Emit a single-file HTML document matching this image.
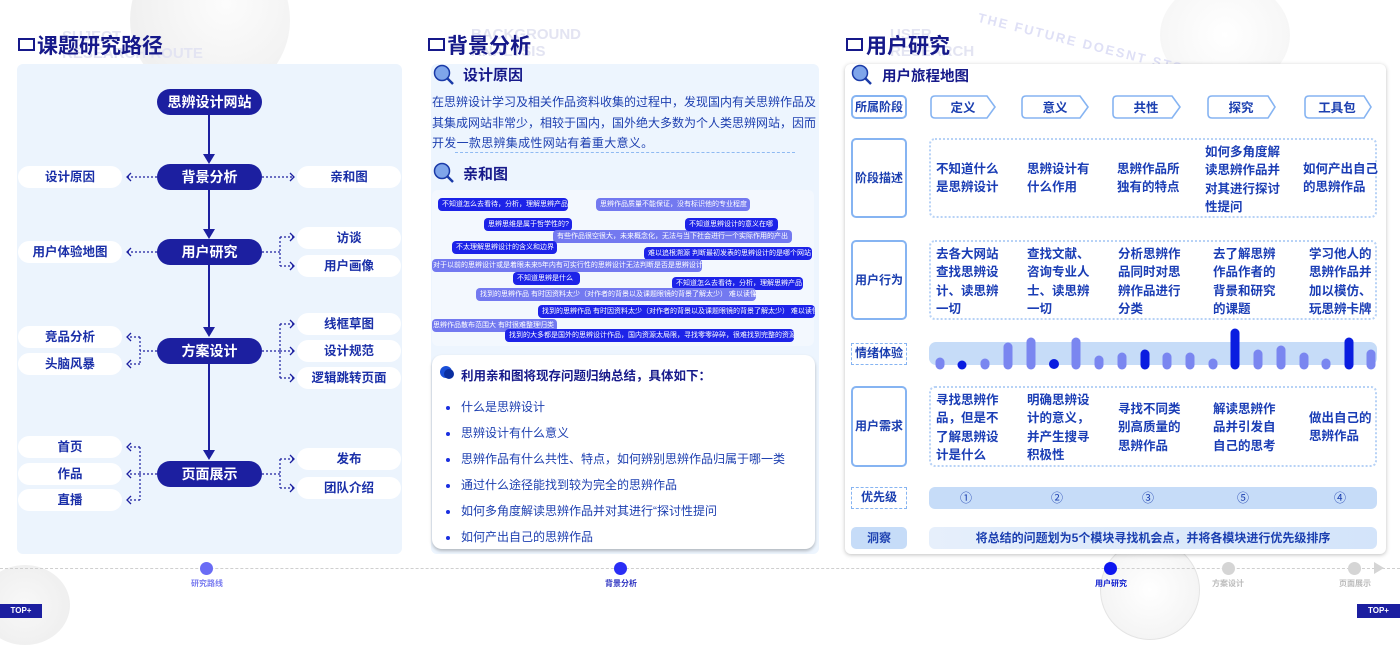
<!DOCTYPE html>
<html><head><meta charset="utf-8"><style>
*{margin:0;padding:0;box-sizing:border-box}
body{width:1400px;height:618px;position:relative;overflow:hidden;background:#fff;font-family:"Liberation Sans","Noto Sans CJK SC",sans-serif}
.a{position:absolute}
.h1{font-size:21px;font-weight:bold;color:#16198a;letter-spacing:0px}
.wm{color:#e3e4f2;font-weight:bold;font-size:15px;line-height:17px}
.node{position:absolute;left:157px;width:105px;height:26px;border-radius:13px;background:#1c1fa0;color:#fff;font-weight:bold;font-size:14px;text-align:center;line-height:26px}
.pill{position:absolute;width:104px;height:22px;border-radius:11px;background:#fff;color:#1a2fa8;font-weight:bold;font-size:12.5px;text-align:center;line-height:22px}
.pl{left:18px}.pr{left:297px}
.tag{position:absolute;height:13px;border-radius:4px;font-size:7px;line-height:13px;color:#fff;white-space:nowrap;padding:0 4px;overflow:hidden}
.d{background:#1d23e8}.l{background:#7379f0}
.bul{position:absolute;left:446px;font-size:12px;color:#1d3fb0}
.bul i{position:absolute;left:0;top:6px;width:4px;height:4px;border-radius:2px;background:#1a2fe0}
.bul span{position:absolute;left:15px;white-space:nowrap;top:-2px}
.rh{position:absolute;left:851px;width:56px;border:2px solid #86b4f2;border-radius:5px;color:#1b3fb0;font-weight:bold;font-size:12px;text-align:center;background:#fff}
.dz{position:absolute;left:929px;width:448px;border:2px dotted #b7d2f6;border-radius:6px}
.ct{position:absolute;color:#1a3db5;font-weight:bold;font-size:12.5px;line-height:18.3px}
.tl{position:absolute;top:578px;font-size:8px;font-weight:bold;width:60px;text-align:center}
.dot{position:absolute;top:562px;width:13px;height:13px;border-radius:50%}
.pline{display:block;width:384px;text-align:justify;text-align-last:justify;white-space:nowrap}
</style></head><body>

<!-- background decorations -->
<div class="a" style="left:130px;top:-60px;width:160px;height:160px;border-radius:50%;background:radial-gradient(circle at 60% 40%,#fafafa,#e6e6e6 70%,#f4f4f4);opacity:.6"></div>
<div class="a" style="left:1160px;top:-20px;width:130px;height:110px;border-radius:50%;background:radial-gradient(circle,#fff,#ececec);opacity:.6"></div>
<div class="a" style="left:1100px;top:540px;width:100px;height:100px;border-radius:50%;border:1px solid #e4e4e4;background:radial-gradient(circle,#fff,#f0f0f0)"></div>
<div class="a" style="left:-20px;top:565px;width:90px;height:80px;border-radius:50%;background:radial-gradient(circle,#f8f8f8,#ececec)"></div>

<!-- Section 1 -->
<div class="a" style="left:18px;top:38px;width:17px;height:13px;border:2px solid #16198a"></div>
<div class="a wm" style="left:62px;top:28px">SUJECT<br>RESEARCH ROUTE</div>
<div class="a h1" style="left:37px;top:30px">课题研究路径</div>
<div class="a" style="left:17px;top:64px;width:385px;height:490px;background:#ecf4fd;border-radius:6px"></div>
<svg class="a" style="left:0;top:0" width="420" height="560">
<g stroke="#1c1fa0" stroke-width="2" fill="#1c1fa0">
<line x1="209" y1="115" x2="209" y2="155"/><polygon points="203,154 215,154 209,164" stroke="none"/>
<line x1="209" y1="190" x2="209" y2="230"/><polygon points="203,229 215,229 209,239" stroke="none"/>
<line x1="209" y1="265" x2="209" y2="328"/><polygon points="203,327 215,327 209,337" stroke="none"/>
<line x1="209" y1="364" x2="209" y2="451"/><polygon points="203,450 215,450 209,460" stroke="none"/>
</g>
<g stroke="#1c1fa0" stroke-width="1.2" fill="none" stroke-dasharray="2 2">
<line x1="157" y1="177" x2="128" y2="177"/><line x1="262" y1="177" x2="293" y2="177"/>
<line x1="157" y1="252" x2="128" y2="252"/>
<line x1="262" y1="252" x2="280" y2="252"/><line x1="280" y1="237" x2="280" y2="266"/><line x1="280" y1="237" x2="293" y2="237"/><line x1="280" y1="266" x2="293" y2="266"/>
<line x1="157" y1="351" x2="140" y2="351"/><line x1="140" y1="337" x2="140" y2="364"/><line x1="140" y1="337" x2="128" y2="337"/><line x1="140" y1="364" x2="128" y2="364"/>
<line x1="262" y1="351" x2="280" y2="351"/><line x1="280" y1="324" x2="280" y2="378"/><line x1="280" y1="324" x2="293" y2="324"/><line x1="280" y1="351" x2="293" y2="351"/><line x1="280" y1="378" x2="293" y2="378"/>
<line x1="157" y1="474" x2="140" y2="474"/><line x1="140" y1="447" x2="140" y2="500"/><line x1="140" y1="447" x2="128" y2="447"/><line x1="140" y1="474" x2="128" y2="474"/><line x1="140" y1="500" x2="128" y2="500"/>
<line x1="262" y1="474" x2="280" y2="474"/><line x1="280" y1="459" x2="280" y2="488"/><line x1="280" y1="459" x2="293" y2="459"/><line x1="280" y1="488" x2="293" y2="488"/>
</g>
<g stroke="#1c1fa0" stroke-width="1.3" fill="none">
<path d="M131 173l-4 4 4 4M131 248l-4 4 4 4M131 333l-4 4 4 4M131 360l-4 4 4 4M131 443l-4 4 4 4M131 470l-4 4 4 4M131 496l-4 4 4 4"/>
<path d="M290 173l4 4-4 4M290 233l4 4-4 4M290 262l4 4-4 4M290 320l4 4-4 4M290 347l4 4-4 4M290 374l4 4-4 4M290 455l4 4-4 4M290 484l4 4-4 4"/>
</g>
</svg>
<div class="node" style="top:89px">思辨设计网站</div>
<div class="node" style="top:164px">背景分析</div>
<div class="node" style="top:239px">用户研究</div>
<div class="node" style="top:338px">方案设计</div>
<div class="node" style="top:461px">页面展示</div>
<div class="pill pl" style="top:166px">设计原因</div>
<div class="pill pr" style="top:166px">亲和图</div>
<div class="pill pl" style="top:241px">用户体验地图</div>
<div class="pill pr" style="top:227px">访谈</div>
<div class="pill pr" style="top:255px">用户画像</div>
<div class="pill pl" style="top:326px">竞品分析</div>
<div class="pill pl" style="top:353px">头脑风暴</div>
<div class="pill pr" style="top:313px">线框草图</div>
<div class="pill pr" style="top:340px">设计规范</div>
<div class="pill pr" style="top:367px">逻辑跳转页面</div>
<div class="pill pl" style="top:436px">首页</div>
<div class="pill pl" style="top:463px">作品</div>
<div class="pill pl" style="top:489px">直播</div>
<div class="pill pr" style="top:448px">发布</div>
<div class="pill pr" style="top:477px">团队介绍</div>

<!-- Section 2 -->
<div class="a wm" style="left:471px;top:26px">BACKGROUND<br>ANALYSIS</div>
<div class="a" style="left:428px;top:38px;width:17px;height:13px;border:2px solid #16198a"></div>
<div class="a h1" style="left:447px;top:30px">背景分析</div>
<div class="a" style="left:431px;top:64px;width:388px;height:490px;background:#edf5fe;border-radius:6px"></div>
<svg class="a" style="left:433px;top:64px" width="22" height="22"><circle cx="9" cy="9" r="7.5" fill="#7fa5ea" stroke="#1a3aa8" stroke-width="1.5"/><line x1="14" y1="14" x2="20" y2="20" stroke="#1a3aa8" stroke-width="2.5"/></svg>
<div class="a" style="left:463px;top:64px;font-size:15px;font-weight:bold;color:#16198a">设计原因</div>
<div class="a" style="left:432px;top:92px;font-size:12px;line-height:20.5px;color:#1d3fb0;overflow:hidden;width:386px"><span class="pline">在思辨设计学习及相关作品资料收集的过程中，发现国内有关思辨作品及</span><span class="pline">其集成网站非常少，相较于国内，国外绝大多数为个人类思辨网站，因而</span><span style="white-space:nowrap;letter-spacing:0.3px">开发一款思辨集成性网站有着重大意义。</span></div>
<div class="a" style="left:455px;top:152px;width:340px;border-top:1.5px dashed #8fbaf2"></div>
<svg class="a" style="left:433px;top:162px" width="22" height="22"><circle cx="9" cy="9" r="7.5" fill="#7fa5ea" stroke="#1a3aa8" stroke-width="1.5"/><line x1="14" y1="14" x2="20" y2="20" stroke="#1a3aa8" stroke-width="2.5"/></svg>
<div class="a" style="left:463px;top:163px;font-size:15px;font-weight:bold;color:#16198a">亲和图</div>
<div class="a" style="left:432px;top:190px;width:382px;height:156px;background:#f3f8fe;border-radius:6px"></div>
<div class="tag d" style="left:438px;top:198px;width:130px">不知道怎么去看待，分析，理解思辨产品</div>
<div class="tag l" style="left:596px;top:198px;width:154px">思辨作品质量不能保证，没有标识他的专业程度</div>
<div class="tag d" style="left:484px;top:218px;width:88px">思辨思维是属于哲学性的?</div>
<div class="tag l" style="left:553px;top:230px;width:239px">有些作品很空很大，未来概念化，无法与当下社会进行一个实际作用的产出</div>
<div class="tag d" style="left:685px;top:218px;width:93px">不知道思辨设计的意义在哪</div>
<div class="tag d" style="left:452px;top:241px;width:105px">不太理解思辨设计的含义和边界</div>
<div class="tag d" style="left:644px;top:247px;width:168px">难以追根溯源 判断最初发表的思辨设计的是哪个网站</div>
<div class="tag l" style="left:432px;top:259px;width:270px;padding:0 1px">对于以前的思辨设计或是着眼未来5年内有可实行性的思辨设计无法判断是否是思辨设计</div>
<div class="tag d" style="left:513px;top:272px;width:67px">不知道思辨是什么</div>
<div class="tag d" style="left:672px;top:277px;width:131px">不知道怎么去看待，分析，理解思辨产品</div>
<div class="tag l" style="left:476px;top:288px;width:280px">找到的思辨作品 有时因资料太少（对作者的背景以及课题眼镜的背景了解太少） 难以读懂</div>
<div class="tag d" style="left:538px;top:305px;width:277px">找到的思辨作品 有时因资料太少（对作者的背景以及课题眼镜的背景了解太少） 难以读懂</div>
<div class="tag l" style="left:432px;top:319px;width:125px;padding:0 1px">思辨作品散布范围大 有时很难整理归类</div>
<div class="tag d" style="left:505px;top:329px;width:289px">找到的大多都是国外的思辨设计作品，国内资源太局限，寻找零零碎碎，很难找到完整的资源</div>
<div class="a" style="left:432px;top:355px;width:383px;height:194px;background:#fff;border-radius:10px;box-shadow:0 2px 3px rgba(0,0,0,.25)"></div>
<div class="a" style="left:440px;top:366px;width:12px;height:12px;border-radius:50%;background:#1a4fd8"></div>
<div class="a" style="left:444px;top:369px;width:10px;height:10px;border-radius:50%;background:#0b2fa0"></div>
<div class="a" style="left:461px;top:365px;font-size:12.5px;font-weight:bold;color:#16198a">利用亲和图将现存问题归纳总结，具体如下：</div>
<div class="bul" style="top:400px"><i></i><span>什么是思辨设计</span></div>
<div class="bul" style="top:426px"><i></i><span>思辨设计有什么意义</span></div>
<div class="bul" style="top:452px"><i></i><span>思辨作品有什么共性、特点，如何辨别思辨作品归属于哪一类</span></div>
<div class="bul" style="top:478px"><i></i><span>通过什么途径能找到较为完全的思辨作品</span></div>
<div class="bul" style="top:504px"><i></i><span>如何多角度解读思辨作品并对其进行“探讨性提问</span></div>
<div class="bul" style="top:530px"><i></i><span>如何产出自己的思辨作品</span></div>

<!-- Section 3 -->
<div class="a wm" style="left:890px;top:26px">USER<br>RESEARCH</div>
<div class="a" style="left:980px;top:10px;color:#dfe0f6;font-weight:bold;font-size:13px;letter-spacing:2px;transform:rotate(14deg);transform-origin:left top;white-space:nowrap">THE FUTURE DOESNT STOP THE</div>
<div class="a" style="left:846px;top:38px;width:17px;height:13px;border:2px solid #16198a"></div>
<div class="a h1" style="left:866px;top:30px">用户研究</div>
<div class="a" style="left:845px;top:64px;width:541px;height:490px;background:#fff;border-radius:6px;box-shadow:0 1px 4px rgba(0,0,0,.25)"></div>
<svg class="a" style="left:851px;top:64px" width="22" height="22"><circle cx="9" cy="9" r="7.5" fill="#7fa5ea" stroke="#1a3aa8" stroke-width="1.5"/><line x1="14" y1="14" x2="20" y2="20" stroke="#1a3aa8" stroke-width="2.5"/></svg>
<div class="a" style="left:882px;top:65px;font-size:14.5px;font-weight:bold;color:#16198a">用户旅程地图</div>

<div class="rh" style="top:95px;height:24px;line-height:20px">所属阶段</div>
<svg class="a" style="left:925px;top:94px" width="460" height="28">
<g fill="#fff" stroke="#86b4f2" stroke-width="1.6">
<path d="M10 2H62L70 13L62 24H10Q6 24 6 20V6Q6 2 10 2Z"/>
<path d="M101 2H155L163 13L155 24H101Q97 24 97 20V6Q97 2 101 2Z"/>
<path d="M192 2H247L255 13L247 24H192Q188 24 188 20V6Q188 2 192 2Z"/>
<path d="M287 2H343L350 13L343 24H287Q283 24 283 20V6Q283 2 287 2Z"/>
<path d="M384 2H439L446 13L439 24H384Q380 24 380 20V6Q380 2 384 2Z"/>
</g>
<g fill="#1b3fb0" font-size="12.5" font-weight="bold" font-family="Liberation Sans,Noto Sans CJK SC,sans-serif" text-anchor="middle">
<text x="38" y="18">定义</text><text x="130" y="18">意义</text><text x="221" y="18">共性</text><text x="316" y="18">探究</text><text x="412" y="18">工具包</text></g>
</svg>

<div class="rh" style="top:138px;height:80px;line-height:76px">阶段描述</div>
<div class="dz" style="top:138px;height:80px"></div>
<div class="ct" style="left:936px;top:160px">不知道什么<br>是思辨设计</div>
<div class="ct" style="left:1027px;top:160px">思辨设计有<br>什么作用</div>
<div class="ct" style="left:1117px;top:160px">思辨作品所<br>独有的特点</div>
<div class="ct" style="left:1205px;top:143px">如何多角度解<br>读思辨作品并<br>对其进行探讨<br>性提问</div>
<div class="ct" style="left:1303px;top:160px">如何产出自己<br>的思辨作品</div>

<div class="rh" style="top:240px;height:80px;line-height:76px">用户行为</div>
<div class="dz" style="top:240px;height:80px"></div>
<div class="ct" style="left:936px;top:245px">去各大网站<br>查找思辨设<br>计、读思辨<br>一切</div>
<div class="ct" style="left:1027px;top:245px">查找文献、<br>咨询专业人<br>士、读思辨<br>一切</div>
<div class="ct" style="left:1118px;top:245px">分析思辨作<br>品同时对思<br>辨作品进行<br>分类</div>
<div class="ct" style="left:1213px;top:245px">去了解思辨<br>作品作者的<br>背景和研究<br>的课题</div>
<div class="ct" style="left:1309px;top:245px">学习他人的<br>思辨作品并<br>加以模仿、<br>玩思辨卡牌</div>

<div class="a" style="left:851px;top:343px;width:56px;height:22px;border:1.5px dashed #86b4f2;color:#1b3fb0;font-weight:bold;font-size:12px;text-align:center;line-height:19px">情绪体验</div>
<div class="a" style="left:929px;top:342px;width:448px;height:23px;background:#c6dcf8;border-radius:7px"></div>
<svg class="a" style="left:929px;top:325px" width="450" height="50">
<g stroke-linecap="round" stroke-width="9">
<line x1="11" y1="37" x2="11" y2="40" stroke="#7a86f0"/>
<line x1="56" y1="38" x2="56" y2="40" stroke="#7a86f0"/>
<line x1="79" y1="22" x2="79" y2="40" stroke="#7a86f0"/>
<line x1="102" y1="17" x2="102" y2="40" stroke="#7a86f0"/>
<line x1="147" y1="17" x2="147" y2="40" stroke="#7a86f0"/>
<line x1="170" y1="35" x2="170" y2="40" stroke="#7a86f0"/>
<line x1="193" y1="32" x2="193" y2="40" stroke="#7a86f0"/>
<line x1="216" y1="29" x2="216" y2="40" stroke="#0a1de0"/>
<line x1="238" y1="32" x2="238" y2="40" stroke="#7a86f0"/>
<line x1="261" y1="32" x2="261" y2="40" stroke="#7a86f0"/>
<line x1="284" y1="38" x2="284" y2="40" stroke="#7a86f0"/>
<line x1="306" y1="8" x2="306" y2="40" stroke="#0a1de0"/>
<line x1="329" y1="29" x2="329" y2="40" stroke="#7a86f0"/>
<line x1="352" y1="25" x2="352" y2="40" stroke="#7a86f0"/>
<line x1="375" y1="32" x2="375" y2="40" stroke="#7a86f0"/>
<line x1="397" y1="38" x2="397" y2="40" stroke="#7a86f0"/>
<line x1="420" y1="17" x2="420" y2="40" stroke="#0a1de0"/>
<line x1="442" y1="29" x2="442" y2="40" stroke="#7a86f0"/>
</g>
<circle cx="33" cy="40" r="4.5" fill="#0a1de0"/><circle cx="125" cy="39" r="5" fill="#0a1de0"/>
</svg>

<div class="rh" style="top:386px;height:81px;line-height:77px">用户需求</div>
<div class="dz" style="top:386px;height:81px"></div>
<div class="ct" style="left:936px;top:391px">寻找思辨作<br>品，但是不<br>了解思辨设<br>计是什么</div>
<div class="ct" style="left:1027px;top:391px">明确思辨设<br>计的意义，<br>并产生搜寻<br>积极性</div>
<div class="ct" style="left:1118px;top:400px">寻找不同类<br>别高质量的<br>思辨作品</div>
<div class="ct" style="left:1213px;top:400px">解读思辨作<br>品并引发自<br>自己的思考</div>
<div class="ct" style="left:1309px;top:409px">做出自己的<br>思辨作品</div>

<div class="a" style="left:851px;top:487px;width:56px;height:22px;border:1.5px dashed #86b4f2;color:#1b3fb0;font-weight:bold;font-size:12px;text-align:center;line-height:19px">优先级</div>
<div class="a" style="left:929px;top:487px;width:448px;height:22px;background:#c6dcf8;border-radius:6px;color:#1b3fb0;font-size:12px;line-height:22px">
<span class="a" style="left:31px">①</span><span class="a" style="left:122px">②</span><span class="a" style="left:213px">③</span><span class="a" style="left:308px">⑤</span><span class="a" style="left:405px">④</span></div>
<div class="a" style="left:851px;top:527px;width:56px;height:22px;background:#c6dcf8;border-radius:5px;color:#1b3fb0;font-weight:bold;font-size:12px;text-align:center;line-height:22px">洞察</div>
<div class="a" style="left:929px;top:527px;width:448px;height:22px;background:linear-gradient(90deg,#e6effb,#d3e4fa);border-radius:6px;color:#1b3fb0;font-weight:bold;font-size:12px;text-align:center;line-height:22px">将总结的问题划为5个模块寻找机会点，并将各模块进行优先级排序</div>

<!-- timeline -->
<div class="a" style="left:0;top:568px;width:1400px;border-top:1.5px dashed #cfcfcf"></div>
<div class="dot" style="left:200px;background:#6a6cf5"></div>
<div class="dot" style="left:614px;background:#2a2ef5"></div>
<div class="dot" style="left:1104px;background:#0d16f0"></div>
<div class="dot" style="left:1222px;background:#d5d5d5"></div>
<div class="dot" style="left:1348px;background:#d5d5d5"></div>
<div class="a" style="left:1374px;top:562px;border-left:10px solid #d5d5d5;border-top:6px solid transparent;border-bottom:6px solid transparent"></div>
<div class="tl" style="left:177px;color:#7a7cf0">研究路线</div>
<div class="tl" style="left:591px;color:#2a30c0">背景分析</div>
<div class="tl" style="left:1081px;color:#1020d0">用户研究</div>
<div class="tl" style="left:1198px;color:#bbb">方案设计</div>
<div class="tl" style="left:1325px;color:#bbb">页面展示</div>
<div class="a" style="left:0;top:604px;width:42px;height:14px;background:#1c1fa0;color:#fff;font-size:8px;font-weight:bold;text-align:center;line-height:14px">TOP+</div>
<div class="a" style="left:1357px;top:604px;width:43px;height:14px;background:#1c1fa0;color:#fff;font-size:8px;font-weight:bold;text-align:center;line-height:14px">TOP+</div>
</body></html>
